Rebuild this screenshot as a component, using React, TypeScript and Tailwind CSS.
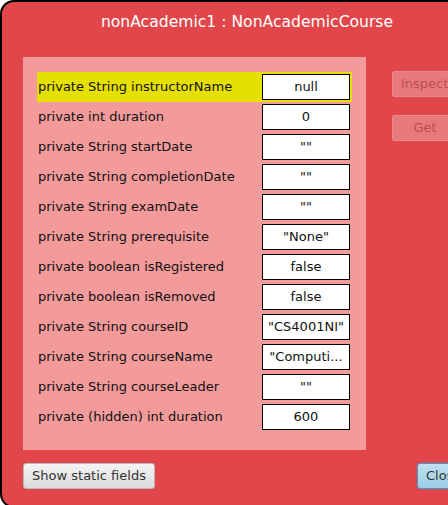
import React from "react";

const fields: { label: string; value: string; selected?: boolean }[] = [
  { label: "private String instructorName", value: "null", selected: true },
  { label: "private int duration", value: "0" },
  { label: "private String startDate", value: '""' },
  { label: "private String completionDate", value: '""' },
  { label: "private String examDate", value: '""' },
  { label: "private String prerequisite", value: '"None"' },
  { label: "private boolean isRegistered", value: "false" },
  { label: "private boolean isRemoved", value: "false" },
  { label: "private String courseID", value: '"CS4001NI"' },
  { label: "private String courseName", value: '"Computi...' },
  { label: "private String courseLeader", value: '""' },
  { label: "private (hidden) int duration", value: "600" },
];

function FieldRow({ label, value, selected }: { label: string; value: string; selected?: boolean }) {
  return (
    <div
      className={`flex h-[30px] items-center pl-[1px] pr-[2px] ${selected ? "bg-[#e6e000]" : ""}`}
    >
      <span className="w-[224px] shrink-0 text-[13px] text-[#111]">{label}</span>
      <div className="flex h-[26px] w-[88px] items-center justify-center border-[1.5px] border-black bg-white text-[13px] text-[#111]">
        {value}
      </div>
    </div>
  );
}

export default function App() {
  return (
    <div
      className="relative h-[505px] w-[448px] overflow-hidden bg-white"
      style={{ fontFamily: '"DejaVu Sans", Verdana, sans-serif' }}
    >
      <div className="flex h-[508px] w-[494px] flex-col rounded-[14px] border-2 border-black bg-[#e1474a]">
        <div className="flex h-[55px] items-start justify-center pt-[9px] text-[15.6px] text-white">
          nonAcademic1 : NonAcademicCourse
        </div>

        <div className="flex">
          <div className="ml-[21px] w-[343px] bg-[#f39b9b] px-[14px] pb-[18px] pt-[15px]">
            {fields.map((f) => (
              <FieldRow key={f.label} {...f} />
            ))}
          </div>
          <div className="ml-[26px] flex flex-col gap-[18px] pt-[14px]">
            <button
              type="button"
              disabled
              className="h-[26px] w-[66px] rounded-[2px] border border-[#ea8a8c] bg-[#e8797b] pl-[8px] text-left text-[13px] whitespace-nowrap text-[#b85052]"
            >
              Inspect
            </button>
            <button
              type="button"
              disabled
              className="h-[26px] w-[66px] rounded-[2px] border border-[#ea8a8c] bg-[#e8797b] text-[13px] text-[#b85052]"
            >
              Get
            </button>
          </div>
        </div>

        <div className="flex items-start pt-[13px]">
          <button
            type="button"
            className="ml-[21px] h-[26px] w-[132px] rounded-[3px] border border-[#b8b8b8] bg-gradient-to-b from-[#f4f4f4] to-[#dcdcdc] text-[13px] text-[#333]"
          >
            Show static fields
          </button>
          <button
            type="button"
            className="ml-[262px] h-[26px] w-[60px] rounded-[3px] border border-[#3a9fd0] bg-gradient-to-b from-[#bfe0f0] to-[#9ccde6] pl-[8px] text-left text-[13px] text-[#333]"
          >
            Close
          </button>
        </div>
      </div>
    </div>
  );
}
